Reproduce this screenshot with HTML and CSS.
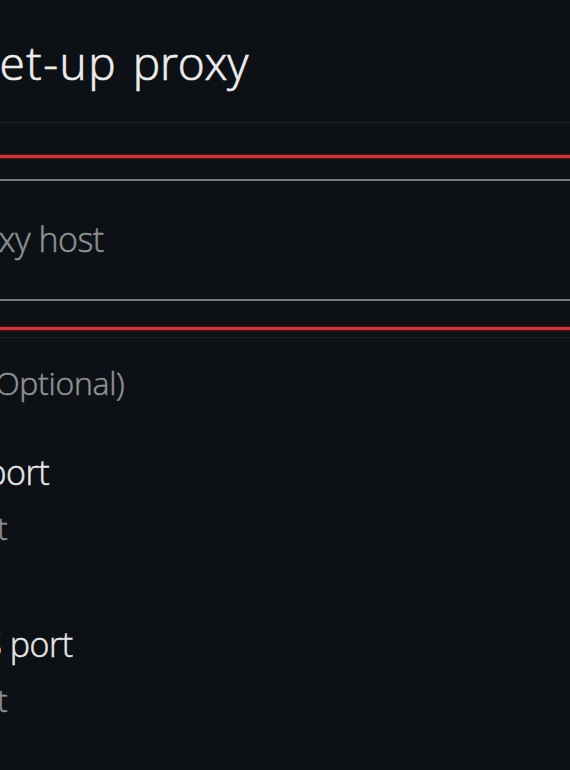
FILE: index.html
```html
<!DOCTYPE html>
<html lang="en">
<head>
<meta charset="utf-8">
<title>Set-up proxy</title>
<link rel="stylesheet" href="styles.css">
</head>
<body>
<div class="page">
  <header class="appbar">
    <h1 class="title"><span class="title-lead">Set-up</span> proxy</h1>
  </header>
  <div class="divider"></div>
  <section class="focus-box">
    <div class="field">
      <span class="placeholder">Proxy host</span>
    </div>
  </section>
  <div class="divider divider-tight"></div>
  <div class="hint-row">
    <span class="hint">Bypass (Optional)</span>
  </div>
  <ul class="list">
    <li class="item">
      <div class="item-title">HTTP port</div>
      <div class="item-sub">Not set</div>
    </li>
    <li class="item">
      <div class="item-title">SOCKS port</div>
      <div class="item-sub">Not set</div>
    </li>
  </ul>
</div>
</body>
</html>
```
FILE: styles.css
```css
html, body {
  margin: 0;
  padding: 0;
  background: #0d1014;
  overflow: hidden;
}

body {
  width: 570px;
  height: 770px;
  font-family: "Open Sans", "Noto Sans", sans-serif;
  font-weight: 300;
}

.page {
  margin-left: -120px;
  width: 760px;
}

.appbar {
  padding: 34px 0 0 93px;
  height: 56px;
}

.title {
  margin: 0;
  font-size: 46px;
  line-height: 56px;
  font-weight: 300;
  letter-spacing: -0.2px;
  word-spacing: 4px;
  color: #ececec;
  -webkit-text-stroke: 0.7px #ececec;
  white-space: nowrap;
}

.title-lead {
  letter-spacing: 1.5px;
}

.divider {
  margin-top: 32px;
  height: 1px;
  background: #1f2327;
}

.divider-tight {
  margin-top: 7px;
}

.focus-box {
  margin-top: 32px;
  border-top: 3px solid #c63a3f;
  border-bottom: 3px solid #c63a3f;
  box-shadow: 0 0 2px 1px rgba(110, 18, 22, 0.8), inset 0 0 2px 1px rgba(110, 18, 22, 0.8);
  padding: 21px 0 26px;
}

.field {
  border-top: 2px solid #777b80;
  border-bottom: 2px solid #777b80;
  padding: 38px 0 40px 67px;
}

.placeholder {
  display: block;
  font-size: 34px;
  line-height: 40px;
  letter-spacing: -0.5px;
  color: #8e9195;
  -webkit-text-stroke: 0.5px #8e9195;
  white-space: nowrap;
}

.hint-row {
  padding: 25px 0 0 0;
}

.hint {
  display: block;
  font-size: 32px;
  line-height: 40px;
  letter-spacing: -0.3px;
  color: #909396;
  -webkit-text-stroke: 0.5px #909396;
  white-space: nowrap;
}

.list {
  list-style: none;
  margin: 0;
  padding: 49px 0 0 20px;
}

.item + .item {
  margin-top: 76px;
}

.item-title {
  font-size: 34px;
  line-height: 40px;
  letter-spacing: -0.5px;
  color: #e6e6e6;
  -webkit-text-stroke: 0.5px #e6e6e6;
  white-space: nowrap;
}

.item-sub {
  margin-top: 16px;
  margin-left: 6px;
  font-size: 32px;
  line-height: 40px;
  letter-spacing: -0.4px;
  color: #8c9094;
  -webkit-text-stroke: 0.5px #8c9094;
  white-space: nowrap;
}
```
